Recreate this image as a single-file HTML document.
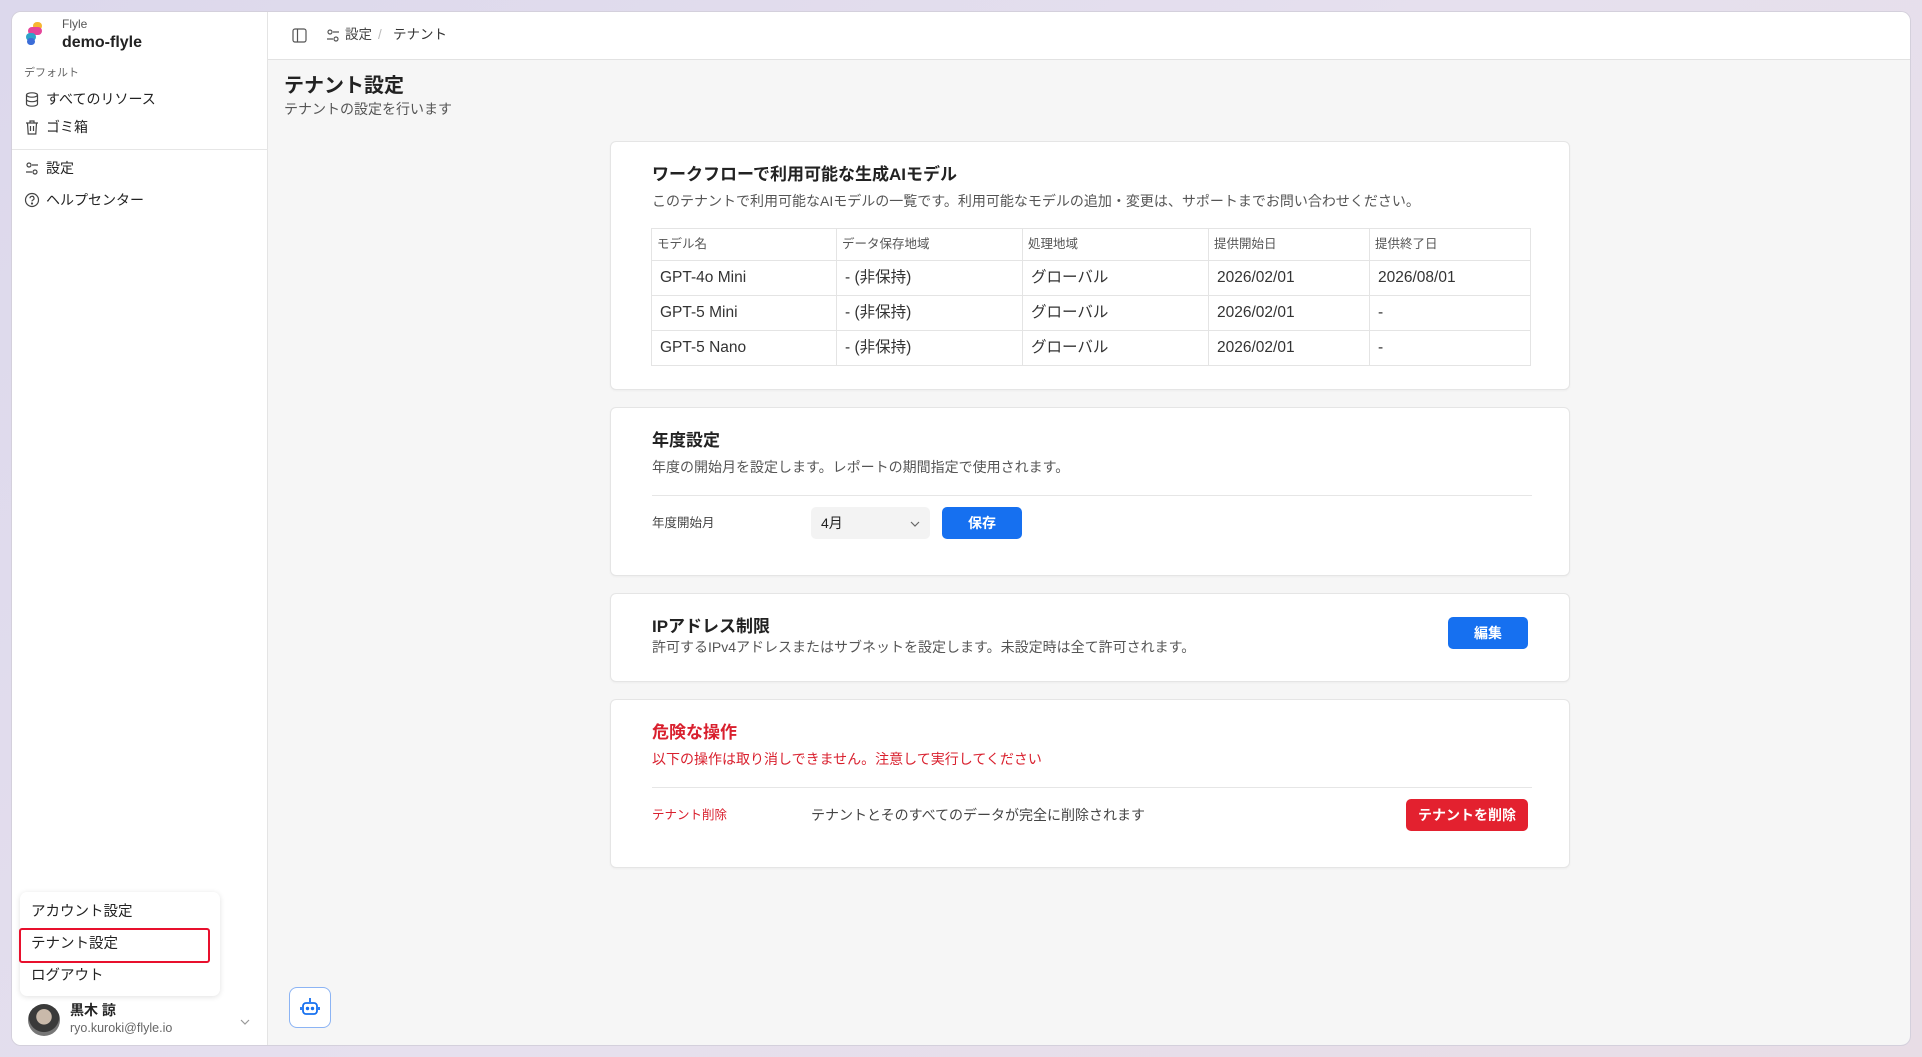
<!DOCTYPE html>
<html><head><meta charset="utf-8"><style>
*{box-sizing:border-box;margin:0;padding:0}
body{width:1922px;height:1057px;overflow:hidden;background:linear-gradient(135deg,#dcd8ec,#e6e0ee 50%,#e8dde6);font-family:"Liberation Sans","Noto Sans CJK JP",sans-serif;color:#222;position:relative}
.win{position:absolute;left:11px;top:11px;width:1900px;height:1035px;background:#f6f6f6;border-radius:10px;overflow:hidden;border:1px solid #d4d0dc}
.side{position:absolute;left:0;top:0;width:256px;height:100%;background:#fff;border-right:1px solid #e4e4e4}
.hdr{position:absolute;left:256px;top:0;right:0;height:48px;background:#fff;border-bottom:1px solid #e2e2e2}
.a{position:absolute;white-space:nowrap;line-height:1}
.card{position:absolute;left:598px;width:960px;background:#fff;border:1px solid #e5e5e5;border-radius:6px;box-shadow:0 1px 2px rgba(0,0,0,.04)}
.ct{font-size:17px;font-weight:bold;color:#222}
.cd{font-size:14px;color:#555}
table{border-collapse:collapse;position:absolute;left:40px;top:86px;width:880px;font-size:15.5px;color:#333;line-height:1}
td,th{border:1px solid #e4e4e4;text-align:left;padding-left:8px;vertical-align:middle}
th{font-weight:normal;font-size:12.5px;color:#555;height:32px;padding-left:5px}
td{height:35px}
.btn{position:absolute;background:#1670f0;color:#fff;font-weight:bold;font-size:14px;border-radius:5px;display:flex;align-items:center;justify-content:center;line-height:1}
</style></head><body>
<div class="win">
<div class="side">
 <svg class="a" style="left:13px;top:9px" width="22" height="26" viewBox="0 0 22 26"><rect x="8" y="1" width="9" height="8" rx="4" fill="#f7b631"/><rect x="3" y="6" width="14" height="8" rx="4" fill="#e5459a"/><rect x="1" y="12" width="10" height="8" rx="4" fill="#2fa3c9"/><rect x="2" y="17" width="8" height="7" rx="3.5" fill="#3b6dd8"/></svg>
 <div class="a" style="left:50px;top:6px;font-size:12px;color:#555">Flyle</div>
 <div class="a" style="left:50px;top:23px;font-size:16px;font-weight:bold">demo-flyle</div>
 <div class="a" style="left:12px;top:56px;font-size:11px;color:#666">デフォルト</div>
 <svg class="a" style="left:13px;top:80px" width="14" height="15" viewBox="0 0 14 15" fill="none" stroke="#444" stroke-width="1.2"><ellipse cx="7" cy="3" rx="5.5" ry="2.2"/><path d="M1.5 3v9c0 1.2 2.5 2.2 5.5 2.2s5.5-1 5.5-2.2V3M1.5 7.5c0 1.2 2.5 2.2 5.5 2.2s5.5-1 5.5-2.2"/></svg>
 <div class="a" style="left:34px;top:80px;font-size:14px">すべてのリソース</div>
 <svg class="a" style="left:13px;top:108px" width="14" height="15" viewBox="0 0 14 15" fill="none" stroke="#444" stroke-width="1.2"><path d="M1 3h12M5 3V1h4v2M2.5 3l.7 11h7.6l.7-11M5.5 6v5M8.5 6v5"/></svg>
 <div class="a" style="left:34px;top:108px;font-size:14px">ゴミ箱</div>
 <div class="a" style="left:0;top:137px;width:256px;border-top:1px solid #e6e6e6"></div>
 <svg class="a" style="left:13px;top:150px" width="14" height="13" viewBox="0 0 14 13" fill="none" stroke="#444" stroke-width="1.2"><circle cx="4" cy="3" r="2"/><path d="M7 3h6M1 10h6"/><circle cx="10" cy="10" r="2"/></svg>
 <div class="a" style="left:34px;top:149px;font-size:14px">設定</div>
 <svg class="a" style="left:12px;top:180px" width="16" height="16" viewBox="0 0 16 16" fill="none" stroke="#444" stroke-width="1.2"><circle cx="8" cy="8" r="6.5"/><path d="M6 6.3a2 2 0 1 1 2.6 1.9c-.5.2-.6.6-.6 1.2"/><circle cx="8" cy="11.5" r=".5" fill="#444"/></svg>
 <div class="a" style="left:34px;top:181px;font-size:14px">ヘルプセンター</div>
 <div class="a" style="left:8px;top:880px;width:200px;height:104px;background:#fff;border-radius:7px;box-shadow:0 1px 6px rgba(0,0,0,.12)"></div>
 <div class="a" style="left:19px;top:893px;font-size:14.5px">アカウント設定</div>
 <div class="a" style="left:7px;top:916px;width:191px;height:35px;border:2.5px solid #e8102d;border-radius:3px"></div>
 <div class="a" style="left:19px;top:925px;font-size:14.5px">テナント設定</div>
 <div class="a" style="left:19px;top:957px;font-size:14.5px">ログアウト</div>
 <div class="a" style="left:16px;top:992px;width:32px;height:32px;border-radius:50%;background:radial-gradient(circle at 50% 40%,#c9b9aa 0 30%,#3a3a3a 32% 60%,#777 62%)"></div>
 <div class="a" style="left:58px;top:991px;font-size:14px;font-weight:bold">黒木 諒</div>
 <div class="a" style="left:58px;top:1010px;font-size:12.5px;color:#666">ryo.kuroki@flyle.io</div>
 <svg class="a" style="left:227px;top:1006px" width="12" height="8" viewBox="0 0 12 8" fill="none" stroke="#999" stroke-width="1.2"><path d="M2 2l4 4 4-4"/></svg>
</div>
<div class="hdr">
 <svg class="a" style="left:24px;top:16px" width="15" height="15" viewBox="0 0 15 15" fill="none" stroke="#555" stroke-width="1.2"><rect x="1" y="1" width="13" height="13" rx="2"/><path d="M5.5 1v13"/></svg>
 <svg class="a" style="left:58px;top:17px" width="14" height="13" viewBox="0 0 14 13" fill="none" stroke="#555" stroke-width="1.2"><circle cx="4" cy="3" r="2"/><path d="M7 3h6M1 10h6"/><circle cx="10" cy="10" r="2"/></svg>
 <div class="a" style="left:77px;top:16px;font-size:13.5px;color:#444">設定</div>
 <div class="a" style="left:110px;top:16px;font-size:13.5px;color:#bbb">/</div>
 <div class="a" style="left:125px;top:16px;font-size:13.5px;color:#333">テナント</div>
</div>
<div class="a" style="left:272px;top:64px;font-size:20px;font-weight:bold">テナント設定</div>
<div class="a" style="left:272px;top:90px;font-size:14px;color:#555">テナントの設定を行います</div>

<div class="card" style="top:129px;height:249px">
 <div class="a ct" style="left:41px;top:24px">ワークフローで利用可能な生成AIモデル</div>
 <div class="a cd" style="left:41px;top:52px">このテナントで利用可能なAIモデルの一覧です。利用可能なモデルの追加・変更は、サポートまでお問い合わせください。</div>
 <table>
 <tr><th style="width:185px">モデル名</th><th style="width:186px">データ保存地域</th><th style="width:186px">処理地域</th><th style="width:161px">提供開始日</th><th>提供終了日</th></tr>
 <tr><td>GPT-4o Mini</td><td>- (非保持)</td><td>グローバル</td><td>2026/02/01</td><td>2026/08/01</td></tr>
 <tr><td>GPT-5 Mini</td><td>- (非保持)</td><td>グローバル</td><td>2026/02/01</td><td>-</td></tr>
 <tr><td>GPT-5 Nano</td><td>- (非保持)</td><td>グローバル</td><td>2026/02/01</td><td>-</td></tr>
 </table>
</div>

<div class="card" style="top:395px;height:169px">
 <div class="a ct" style="left:41px;top:24px">年度設定</div>
 <div class="a cd" style="left:41px;top:52px">年度の開始月を設定します。レポートの期間指定で使用されます。</div>
 <div class="a" style="left:41px;top:87px;width:880px;border-top:1px solid #e6e6e6"></div>
 <div class="a" style="left:41px;top:109px;font-size:12.5px;color:#444">年度開始月</div>
 <div class="a" style="left:200px;top:99px;width:119px;height:32px;background:#f3f3f3;border-radius:5px;font-size:14px;padding:9px 10px">4月</div>
 <svg class="a" style="left:298px;top:112px" width="12" height="8" viewBox="0 0 12 8" fill="none" stroke="#666" stroke-width="1.2"><path d="M2 2l4 4 4-4"/></svg>
 <div class="btn" style="left:331px;top:99px;width:80px;height:32px">保存</div>
</div>

<div class="card" style="top:581px;height:89px">
 <div class="a ct" style="left:41px;top:24px">IPアドレス制限</div>
 <div class="a cd" style="left:41px;top:46px">許可するIPv4アドレスまたはサブネットを設定します。未設定時は全て許可されます。</div>
 <div class="btn" style="left:837px;top:23px;width:80px;height:32px">編集</div>
</div>

<div class="card" style="top:687px;height:169px">
 <div class="a ct" style="left:41px;top:24px;color:#d9202e">危険な操作</div>
 <div class="a cd" style="left:41px;top:52px;color:#d9202e">以下の操作は取り消しできません。注意して実行してください</div>
 <div class="a" style="left:41px;top:87px;width:880px;border-top:1px solid #e6e6e6"></div>
 <div class="a" style="left:41px;top:109px;font-size:12.5px;color:#d9202e">テナント削除</div>
 <div class="a" style="left:200px;top:108px;font-size:14px;color:#444">テナントとそのすべてのデータが完全に削除されます</div>
 <div class="btn" style="left:795px;top:99px;width:122px;height:32px;background:#e3212f">テナントを削除</div>
</div>

<div class="a" style="left:277px;top:975px;width:42px;height:41px;background:#fff;border:1.5px solid #8cb4f4;border-radius:8px"></div>
<svg class="a" style="left:287px;top:984px" width="22" height="22" viewBox="0 0 22 22" fill="none" stroke="#1670f0" stroke-width="1.8"><path d="M11 2v4"/><rect x="4" y="7" width="14" height="11" rx="3"/><path d="M2 11v3M20 11v3"/><circle cx="8.5" cy="12.5" r=".8" fill="#1670f0"/><circle cx="13.5" cy="12.5" r=".8" fill="#1670f0"/></svg>
</div>
</body></html>
